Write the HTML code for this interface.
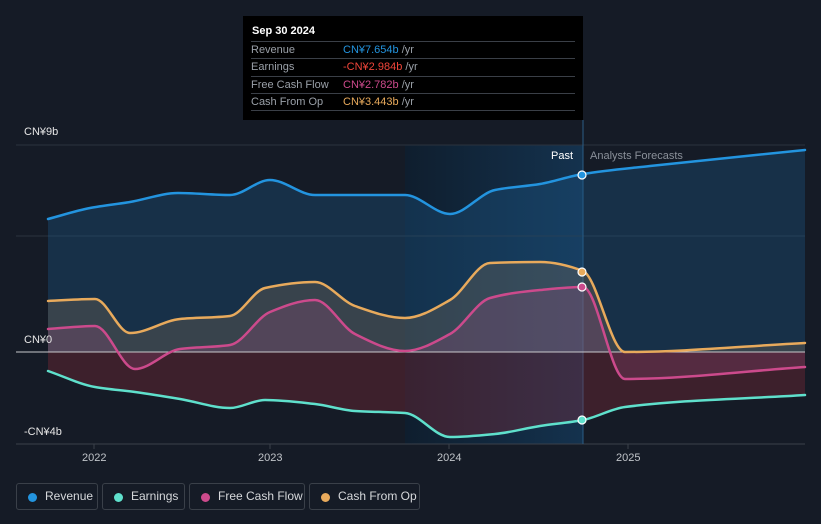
<!DOCTYPE html>
<html><head><meta charset="utf-8"><style>
body{margin:0;background:#151b26;width:821px;height:524px;overflow:hidden;font-family:"Liberation Sans",sans-serif;position:relative}
.tt{position:absolute;left:243px;top:16px;width:340px;height:104px;background:#000;color:#fff;font-size:11px}
.tt .h{position:absolute;left:9px;top:9px;font-weight:bold}
.tt .r{position:absolute;left:8px;width:324px;border-top:1px solid #3a3f47;height:17px;line-height:17px;color:#9aa0a8}
.tt .r span{position:absolute;left:92px}
.lbl{position:absolute;color:#e6e6e6;font-size:11px}
.leg{position:absolute;top:483px;height:27px;border:1px solid #3a4049;border-radius:3px;color:#d6d8db;font-size:12px;line-height:27px;box-sizing:border-box}
.leg i{position:absolute;left:11px;top:9px;width:9px;height:9px;border-radius:50%}
.leg b{font-weight:normal;position:absolute;left:28px;top:-1px}
</style></head><body>
<svg id="s" width="821" height="524" style="position:absolute;left:0;top:0">
<defs><linearGradient id="pg" x1="0" x2="1" y1="0" y2="0"><stop offset="0" stop-color="#0f1e2e"/><stop offset="1" stop-color="#14324e"/></linearGradient></defs>
<rect x="405" y="145" width="178" height="299" fill="url(#pg)"/>
<line x1="16" y1="145" x2="805" y2="145" stroke="#2c333d"/>
<line x1="16" y1="236" x2="805" y2="236" stroke="#2c333d"/>
<line x1="16" y1="444" x2="805" y2="444" stroke="#3a404a"/>
<line x1="583" y1="120" x2="583" y2="444" stroke="#2a5d86"/>
<g id="fills"></g>
<line x1="16" y1="352" x2="805" y2="352" stroke="#c8c8cc" stroke-width="1"/>
<g id="lines" fill="none" stroke-width="2.5" stroke-linecap="round"></g>
<g stroke="#fff" stroke-width="1.2">
<circle cx="582" cy="175" r="4" fill="#2394df"/>
<circle cx="582" cy="272" r="4" fill="#e8aa5c"/>
<circle cx="582" cy="287" r="4" fill="#cc4a8c"/>
<circle cx="582" cy="420" r="4" fill="#5fe0cc"/>
</g>
<g stroke="#3a404a"><line x1="94" y1="444" x2="94" y2="449"/><line x1="270" y1="444" x2="270" y2="449"/><line x1="449" y1="444" x2="449" y2="449"/><line x1="628" y1="444" x2="628" y2="449"/></g>
</svg>
<script>
var S={
rev:[[48,219],[90,208],[130,202],[178,193],[230,195],[270,180],[315,195],[405,195],[450,214],[495,190],[540,184],[583,174],[650,166],[805,150]],
cfo:[[48,301],[95,299],[130,333],[180,319],[230,316],[265,288],[315,282],[355,306],[405,318],[450,300],[490,263],[540,262],[583,271],[625,352],[805,343]],
fcf:[[48,329],[95,326],[135,369],[180,349],[230,345],[270,312],[315,300],[355,334],[405,351],[450,334],[490,298],[540,290],[583,287],[625,379],[805,367]],
ear:[[48,371],[95,387],[135,392],[180,399],[230,408],[265,400],[315,404],[355,411],[405,413],[450,437],[495,434],[540,426],[583,420],[625,407],[805,395]]};
function path(p){var n=p.length,d=[],m=[];
for(var i=0;i<n-1;i++)d[i]=(p[i+1][1]-p[i][1])/(p[i+1][0]-p[i][0]);
m[0]=d[0];m[n-1]=d[n-2];
for(i=1;i<n-1;i++){if(d[i-1]*d[i]<=0)m[i]=0;else{var h0=p[i][0]-p[i-1][0],h1=p[i+1][0]-p[i][0];
m[i]=3*(h0+h1)/((2*h1+h0)/d[i-1]+(h1+2*h0)/d[i]);}}
var s="M"+p[0];
for(i=0;i<n-1;i++){var a=p[i],b=p[i+1],h=(b[0]-a[0])/3;
s+=" C"+(a[0]+h)+","+(a[1]+m[i]*h)+" "+(b[0]-h)+","+(b[1]-m[i+1]*h)+" "+b[0]+","+b[1];}return s;}
var ns="http://www.w3.org/2000/svg";
function el(g,d,f,o,st){var e=document.createElementNS(ns,"path");e.setAttribute("d",d);if(f){e.setAttribute("fill",f);e.setAttribute("opacity",o);}else e.setAttribute("stroke",st);document.getElementById(g).appendChild(e);}
var cl=" L805,352 L48,352 Z";
el("fills",path(S.rev)+cl,"#1c5a8a",0.35);
el("fills",path(S.ear)+cl,"#8a2a38",0.35);
el("fills",path(S.cfo)+cl,"#9a7a58",0.25);
el("fills",path(S.fcf)+cl,"#a04a80",0.25);
el("lines",path(S.rev),0,0,"#2394df");
el("lines",path(S.cfo),0,0,"#e8aa5c");
el("lines",path(S.fcf),0,0,"#cc4a8c");
el("lines",path(S.ear),0,0,"#5fe0cc");
</script>
<div class="lbl" style="left:24px;top:126px">CN¥9b</div>
<div class="lbl" style="left:24px;top:334px">CN¥0</div>
<div class="lbl" style="left:24px;top:426px">-CN¥4b</div>
<div class="lbl" style="left:551px;top:150px;color:#fff">Past</div>
<div class="lbl" style="left:590px;top:150px;color:#8a9099">Analysts Forecasts</div>
<div class="lbl" style="left:82px;top:452px;color:#c0c4c9">2022</div>
<div class="lbl" style="left:258px;top:452px;color:#c0c4c9">2023</div>
<div class="lbl" style="left:437px;top:452px;color:#c0c4c9">2024</div>
<div class="lbl" style="left:616px;top:452px;color:#c0c4c9">2025</div>
<div class="tt"><div class="h">Sep 30 2024</div>
<div class="r" style="top:25px">Revenue<span><em style="font-style:normal;color:#2394df">CN¥7.654b</em> /yr</span></div>
<div class="r" style="top:42px">Earnings<span><em style="font-style:normal;color:#f0453a">-CN¥2.984b</em> /yr</span></div>
<div class="r" style="top:60px">Free Cash Flow<span><em style="font-style:normal;color:#cc4a8c">CN¥2.782b</em> /yr</span></div>
<div class="r" style="top:77px">Cash From Op<span><em style="font-style:normal;color:#e8aa5c">CN¥3.443b</em> /yr</span></div>
<div class="r" style="top:94px;height:0"></div>
</div>
<div class="leg" style="left:16px;width:82px"><i style="background:#2394df"></i><b>Revenue</b></div>
<div class="leg" style="left:102px;width:83px"><i style="background:#5fe0cc"></i><b>Earnings</b></div>
<div class="leg" style="left:189px;width:116px"><i style="background:#cc4a8c"></i><b>Free Cash Flow</b></div>
<div class="leg" style="left:309px;width:111px"><i style="background:#e8aa5c"></i><b>Cash From Op</b></div>
</body></html>
